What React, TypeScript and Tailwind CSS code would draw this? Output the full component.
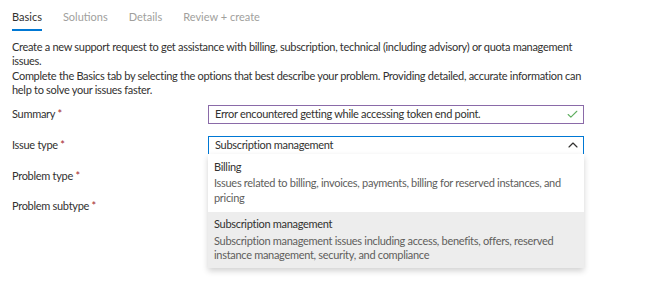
import { Check, ChevronUp } from 'lucide-react'

const tabs = ['Basics', 'Solutions', 'Details', 'Review + create']

const options = [
  {
    title: 'Billing',
    lines: ['Issues related to billing, invoices, payments, billing for reserved instances, and', 'pricing'],
    selected: false,
  },
  {
    title: 'Subscription management',
    lines: [
      'Subscription management issues including access, benefits, offers, reserved',
      'instance management, security, and compliance',
    ],
    selected: true,
  },
]

function Label({ text }: { text: string }) {
  return (
    <div className="w-[196px] shrink-0 text-[#323130]">
      {text} <span className="text-[#a4262c]">*</span>
    </div>
  )
}

export default function App() {
  return (
    <div className="h-[306px] w-[655px] overflow-hidden bg-white px-3 pt-[10px] font-['Lato',sans-serif] text-[11px] leading-[14.5px] tracking-[-0.3px] text-[#323130]">
      <div className="flex gap-[21px] tracking-normal">
        {tabs.map((t, i) => (
          <div key={t} className="flex flex-col">
            <span className={i === 0 ? 'text-[#323130]' : 'text-[#a19f9d]'}>{t}</span>
            <span className={i === 0 ? 'mt-[4px] h-[2px] bg-[#0078d4]' : 'mt-[4px] h-[2px]'} />
          </div>
        ))}
      </div>

      <p className="mt-[9px] whitespace-nowrap">
        Create a new support request to get assistance with billing, subscription, technical (including advisory) or quota
        management
        <br />
        issues.
        <br />
        Complete the Basics tab by selecting the options that best describe your problem. Providing detailed, accurate
        information can
        <br />
        help to solve your issues faster.
      </p>

      <div className="mt-[1px] flex h-[31px] items-center">
        <Label text="Summary" />
        <div className="flex h-[19px] w-[376px] items-center justify-between border border-[#8a6aa8] pl-[6px] pr-[4px]">
          <span>Error encountered getting while accessing token end point.</span>
          <Check size={13} strokeWidth={2} className="text-[#5fae5f]" />
        </div>
      </div>

      <div className="flex h-[31px] items-center">
        <Label text="Issue type" />
        <div className="relative">
          <div className="flex h-[19px] w-[376px] items-center justify-between border border-[#0078d4] pl-[6px] pr-[2px]">
            <span>Subscription management</span>
            <ChevronUp size={16} strokeWidth={1.75} className="text-[#323130]" />
          </div>
          <div className="absolute left-0 top-[18px] z-10 w-[376px] bg-white shadow-[0_3px_6px_rgba(0,0,0,0.18)]">
            {options.map((o) => (
              <div
                key={o.title}
                className={o.selected ? 'bg-[#ededed] px-[6px] pb-[5px] pt-[5px]' : 'px-[6px] pb-[7px] pt-[6px]'}
              >
                <div className="mb-[2px] text-[#323130]">{o.title}</div>
                {o.lines.map((l) => (
                  <div key={l} className="whitespace-nowrap text-[#605e5c]">
                    {l}
                  </div>
                ))}
              </div>
            ))}
          </div>
        </div>
      </div>

      <div className="flex h-[31px] items-center">
        <Label text="Problem type" />
      </div>
      <div className="flex h-[30px] items-center">
        <Label text="Problem subtype" />
      </div>
    </div>
  )
}
